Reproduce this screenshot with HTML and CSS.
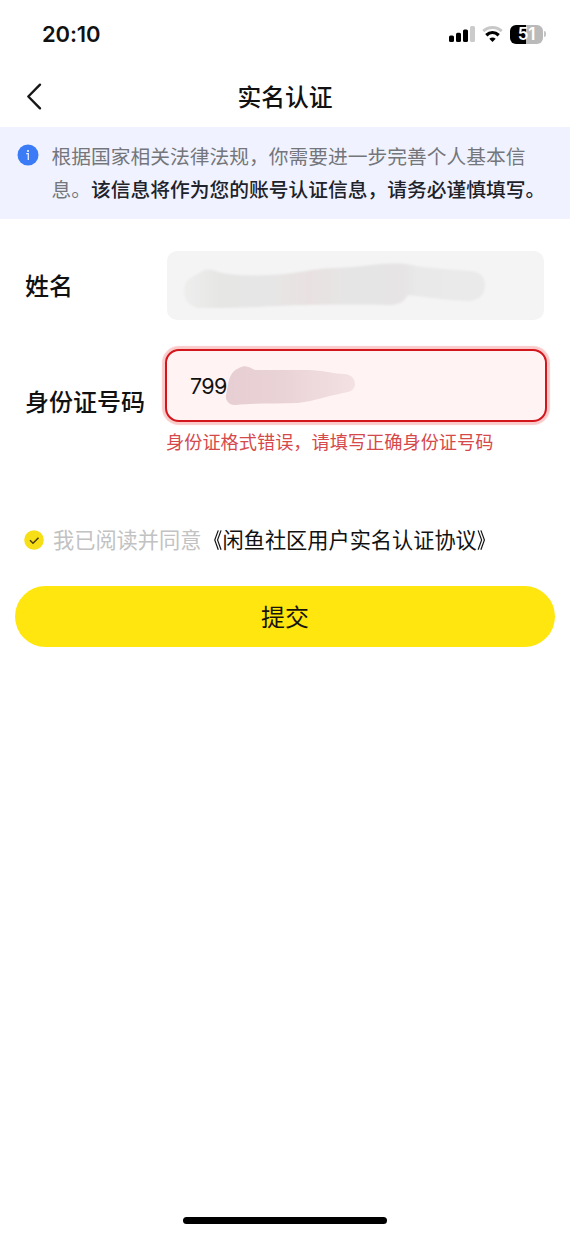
FILE: index.html
```html
<!DOCTYPE html>
<html lang="zh-CN">
<head>
<meta charset="utf-8">
<title>实名认证</title>
<link rel="stylesheet" href="styles.css">
</head>
<body>
<main class="screen">
  <div class="status">
    <span class="time">20:10</span>
    <div class="indicators">
      <svg class="signal" width="26" height="16" viewBox="0 0 26 16">
        <rect x="0" y="9.500" width="5" height="6.500" rx="1.500"/>
        <rect x="7" y="6.700" width="5" height="9.300" rx="1.500"/>
        <rect x="14" y="3.500" width="5" height="12.500" rx="1.500"/>
        <rect x="21" y="0" width="5" height="16" rx="1.500" fill="#cbcbcb"/>
      </svg>
      <svg class="wifi" width="21" height="16" viewBox="0 0 21 16" fill="none">
        <path d="M1.300 5.200C6.500.3 14.500.3 19.700 5.200" stroke="#c8c8c8" stroke-width="3"/>
        <path d="M4.300 9.200C8 5.800 13 5.800 16.700 9.200" stroke="#000" stroke-width="3.300"/>
        <path d="M7.300 12.700Q10.500 10.200 13.700 12.700L10.500 16Z" fill="#000"/>
      </svg>
      <div class="battery"><span class="level">51</span></div>
      <span class="cap"></span>
    </div>
  </div>
  <header class="nav">
    <svg class="back" width="16" height="28" viewBox="0 0 16 28" fill="none" stroke="#171717" stroke-width="2.400" stroke-linecap="round" stroke-linejoin="round"><path d="M14 2.700 2.300 14.500 14 26.300"/></svg>
    <h1 class="title">实名认证</h1>
  </header>
  <section class="notice">
    <svg class="info" width="22" height="22" viewBox="0 0 22 22"><circle cx="11" cy="11" r="10.500" fill="#3b7cf6"/><circle cx="11" cy="6.900" r="1" fill="#fff"/><path d="M9.200 9.700H11.300V16" fill="none" stroke="#e5edff" stroke-width="1.300"/></svg>
    <p class="notice-text">根据国家相关法律法规，你需要进一步完善个人基本信<br>息。<strong>该信息将作为您的账号认证信息，请务必谨慎填写。</strong></p>
  </section>
  <form class="form">
    <div class="row">
      <label class="label">姓名</label>
      <div class="field">
        <svg class="smudge" width="377" height="69" viewBox="0 0 377 69">
          <defs>
            <linearGradient id="name-mask" gradientUnits="userSpaceOnUse" x1="16" y1="0" x2="317" y2="0">
              <stop offset="0" stop-color="#eeeeee"/><stop offset=".12" stop-color="#e6e6e5"/><stop offset=".28" stop-color="#e7e6e6"/><stop offset=".42" stop-color="#e9e1e1"/><stop offset=".54" stop-color="#e6e5e5"/><stop offset=".73" stop-color="#e6e4e4"/><stop offset=".78" stop-color="#e9e9e9"/><stop offset="1" stop-color="#eaeaea"/>
            </linearGradient>
            <filter id="soft"><feGaussianBlur stdDeviation=".8"/></filter>
          </defs>
          <path filter="url(#soft)" fill="url(#name-mask)" d="M17 38C18 29 24 26 31 23C38 17 45 18 51 21C63 24 80 25 102 24C132 23 145 17 170 17C196 16 216 11 238 13C258 17 279 18 302 20C313 20 318 26 318 34C318 45 311 50 299 50C279 49 263 47 241 44C236 52 231 54 220 54C182 53 123 54 91 56C69 57 48 57 31 57C21 54 16 48 17 38Z"/>
        </svg>
      </div>
    </div>
    <div class="row id-row">
      <label class="label">身份证号码</label>
      <div class="id-control">
        <div class="field invalid">
          <span class="value">799</span>
          <svg class="smudge-id" width="132" height="42" viewBox="0 0 132 42">
            <defs><linearGradient id="id-mask"><stop offset="0" stop-color="#e6ced2"/><stop offset=".45" stop-color="#ead3d6"/><stop offset="1" stop-color="#f3e1e3"/></linearGradient></defs>
            <path fill="url(#id-mask)" d="M3 20C4 12 7 6 14 3C21-1 25 3 30 5L83 5C97 5 109 9 120 9C128 10 130 15 130 20C129 27 122 27 114 29C101 31 91 36 73 38C48 39 26 38 11 40C4 41 0 35 1 30Z"/>
          </svg>
        </div>
        <p class="error">身份证格式错误，请填写正确身份证号码</p>
      </div>
    </div>
    <div class="agree">
      <svg class="check" width="20" height="20" viewBox="0 0 20 20"><circle cx="10" cy="10" r="9.800" fill="#f7df17"/><path d="M6 10.300 9 13.200 14.500 7.800" fill="none" stroke="#4b3a10" stroke-width="1.500"/></svg>
      <span class="agree-text">我已阅读并同意</span><span class="link"><span class="open">《</span>闲鱼社区用户实名认证协议<span class="close">》</span></span>
    </div>
    <button class="submit" type="button">提交</button>
  </form>
  <div class="home"></div>
</main>
</body>
</html>
```
FILE: styles.css
```css
* { box-sizing: border-box; }
body { margin: 0; background: #fff; color: #111; font-family: "Noto Sans CJK SC", sans-serif; }
.screen { width: 570px; height: 1235px; display: flex; flex-direction: column; background: #fff; }
.status { height: 67px; flex: none; display: flex; justify-content: space-between; align-items: flex-start; padding: 20px 24px 0 42px; }
.time { font: 600 22px/29px Inter, sans-serif; letter-spacing: -.15px; }
.indicators { display: flex; align-items: center; padding-top: 4px; height: 24px; }
.signal { margin: 0 7px 0 0; }
.wifi { margin: 0 7px 0 0; }
.battery { width: 33px; height: 19px; border-radius: 6px; background: linear-gradient(90deg, #000 50%, #bababa 50%); display: grid; place-items: center; }
.level { color: #fff; font: 600 17px/19px Inter, sans-serif; letter-spacing: -.3px; }
.cap { width: 2px; height: 6px; margin-left: 1px; border-radius: 0 3px 3px 0; background: #c4c4c4; }
.nav { height: 60px; flex: none; display: grid; grid-template-columns: 50px 1fr 50px; align-items: center; }
.back { margin-left: 26px; margin-top: -2px; }
.title { margin: -2px 0 0; text-align: center; font-size: 23.8px; line-height: 36px; font-weight: 500; }
.notice { height: 92px; flex: none; display: flex; align-items: flex-start; background: #f0f3ff; padding: 12px 0 0 17px; }
.info { margin-top: 5px; flex: none; }
.notice-text { margin: 0 0 0 12.5px; font-size: 19.75px; line-height: 33px; font-weight: 400; color: #74767b; white-space: nowrap; }
.notice-text strong { font-weight: 500; color: #20222a; }
.form { flex: 1; display: flex; flex-direction: column; padding: 32px 15px 0; }
.row { display: flex; align-items: center; padding-left: 10px; }
.label { width: 142px; flex: none; margin-top: -2px; font-size: 24px; line-height: 36px; font-weight: 500; white-space: nowrap; }
.field { width: 377px; height: 69px; background: #f4f4f4; border-radius: 10px; overflow: hidden; }
.smudge { display: block; }
.id-row { margin-top: 29px; align-items: flex-start; }
.id-row .label { width: 140px; margin-top: 0; padding-top: 34px; }
.id-control { width: 382px; }
.invalid { width: 382px; height: 73px; display: flex; align-items: center; padding-left: 23px; background: #fff3f4; border: 2px solid #d3161c; border-radius: 14px; box-shadow: 0 0 1px 3px #facaca; overflow: visible; }
.value { width: 35px; flex: none; font: 400 21.5px/30px Inter, sans-serif; letter-spacing: -.6px; white-space: nowrap; }
.error { margin: 6px 0 0 1px; font-size: 18.2px; line-height: 27px; font-weight: 400; color: #d6494b; white-space: nowrap; }
.agree { display: flex; align-items: center; height: 32px; margin: 68px 0 0 9px; font-size: 21.2px; line-height: 32px; white-space: nowrap; }
.check { flex: none; margin-right: 9px; margin-top: 1px; }
.agree-text { color: #c2c2c2; font-weight: 400; }
.open, .close { display: inline-block; font-weight: 500; transform: scaleX(.8); }
.open { transform-origin: 100% 50%; }
.close { transform-origin: 0 50%; }
.submit { width: 540px; height: 61px; margin: 31px 0 0; padding: 0 0 2px; border: 0; border-radius: 31px; background: #ffe60f; color: #17140b; font: 400 24px/36px "Noto Sans CJK SC", sans-serif; }
.home { width: 204px; height: 7px; flex: none; align-self: center; margin-bottom: 11px; border-radius: 4px; background: #000; }
```
